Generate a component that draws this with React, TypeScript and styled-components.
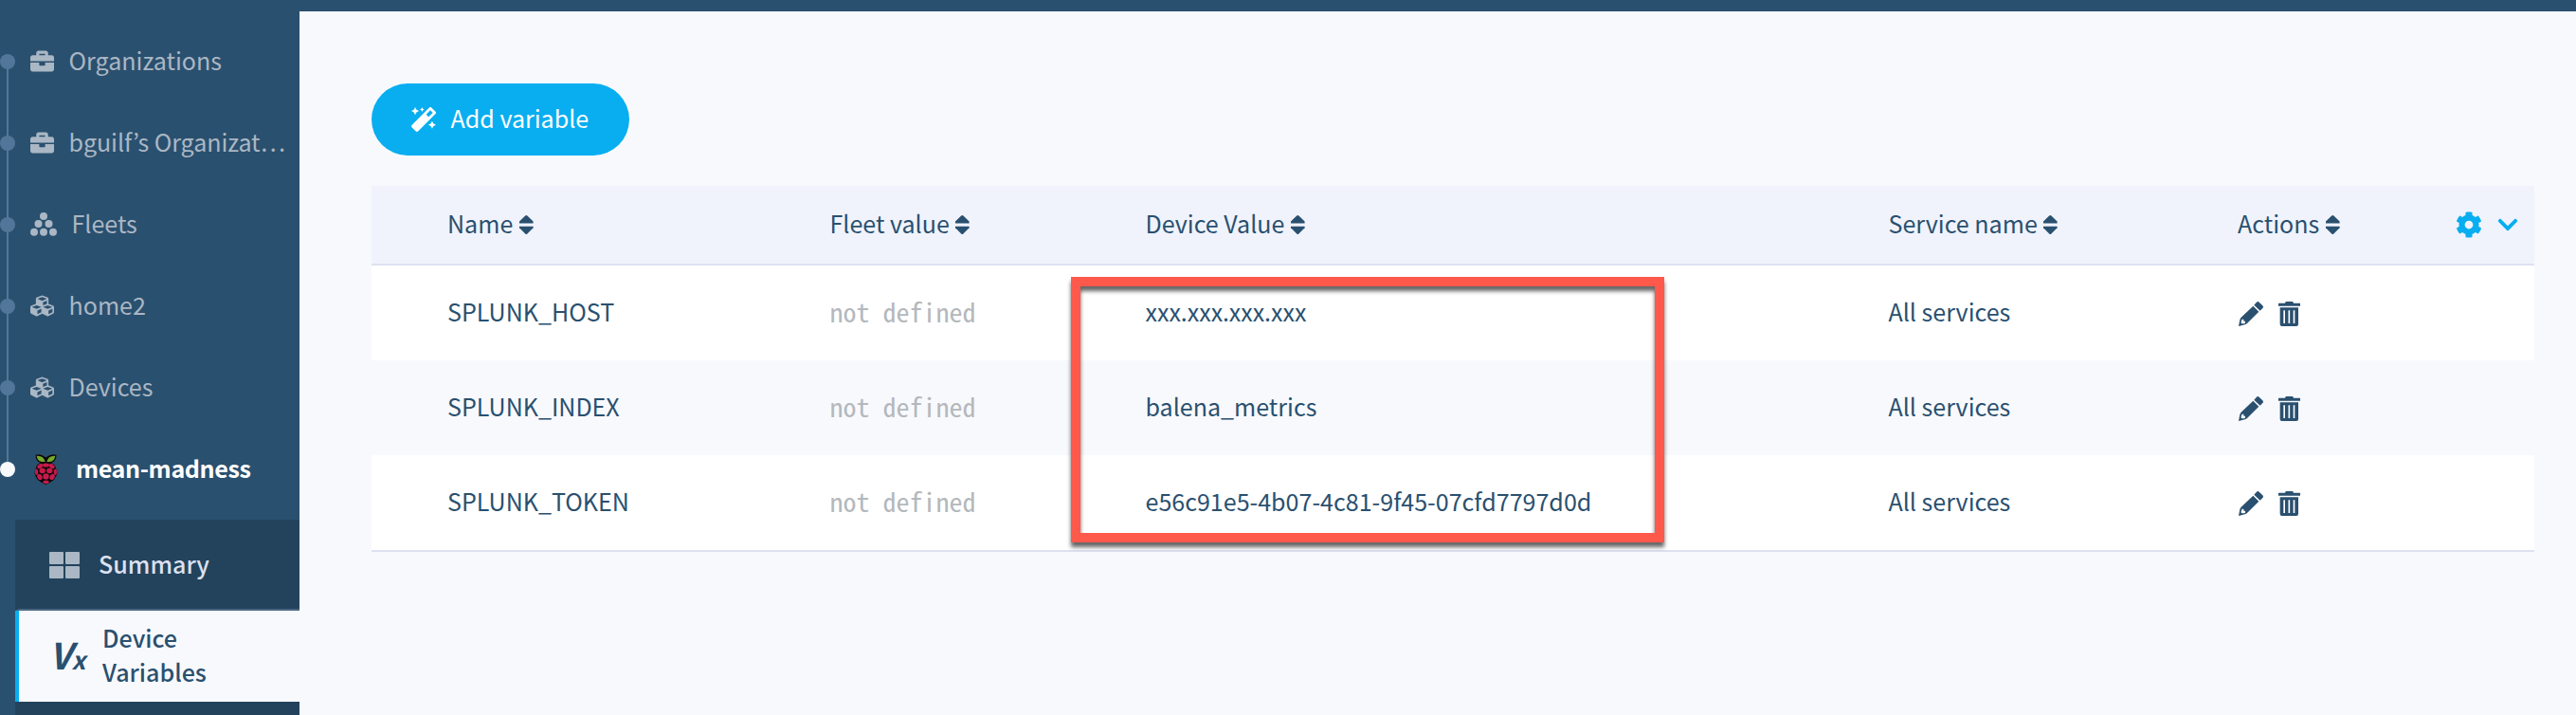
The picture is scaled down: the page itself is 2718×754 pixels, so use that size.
import React from 'react';
import styled, { createGlobalStyle } from 'styled-components';
import { FaBriefcase, FaCubes, FaCog, FaChevronDown, FaMagic } from 'react-icons/fa';

const SANS = '"Noto Sans CJK JP", "Noto Sans", sans-serif';
const MONO = '"Noto Sans Mono CJK JP", "Liberation Mono", monospace';
const navy = '#2a506f';

const GlobalStyle = createGlobalStyle`
  *, *::before, *::after { box-sizing: border-box; }
  body { margin: 0; background: #f8f9fd; color: ${navy}; font: 25.05px/36px ${SANS}; overflow: hidden; }
`;

const Page = styled.div`
  height: 754px;
  border-top: 12px solid ${navy};
  display: flex;
  overflow: hidden;
`;

const Sidebar = styled.aside`
  width: 316px;
  flex: none;
  background: ${navy};
`;

const Crumbs = styled.nav`
  display: flex;
  flex-direction: column;
  padding-top: 10px;
  height: 536px;
`;

const Crumb = styled.a<{ $current?: boolean }>`
  display: flex;
  align-items: center;
  height: 86px;
  white-space: nowrap;
  color: ${p => (p.$current ? '#fff' : '#aab7c4')};
  font-weight: ${p => (p.$current ? 700 : 400)};
`;

const Rail = styled.span<{ $first?: boolean; $last?: boolean }>`
  width: 16px;
  height: 86px;
  flex: none;
  display: grid;
  place-items: center;
  background: linear-gradient(#527699, #527699) no-repeat 7px ${p => (p.$first ? '43px' : '0')} / 2px ${p => (p.$first || p.$last ? '43px' : '86px')};
  &::after {
    content: '';
    width: 16px;
    height: 16px;
    border-radius: 50%;
    background: ${p => (p.$last ? '#f8f9fd' : '#527699')};
  }
`;

const CrumbIcon = styled.span<{ $indent?: number; $gap?: number; $lift?: number }>`
  display: flex;
  margin-left: ${p => p.$indent ?? 16}px;
  margin-right: ${p => p.$gap ?? 15.5}px;
  margin-bottom: ${p => p.$lift ?? 2}px;
`;

const Label = styled.span<{ $spacing?: number; $lift?: number }>`
  letter-spacing: ${p => p.$spacing ?? 0}px;
  margin-bottom: ${p => p.$lift ?? 5}px;
`;

const SubMenu = styled.div`
  margin-left: 16px;
  background: #23435d;
  height: 206px;
`;

const SubItem = styled.a<{ $active?: boolean }>`
  display: flex;
  align-items: center;
  height: 96px;
  font-weight: 500;
  color: ${p => (p.$active ? navy : '#dde1f0')};
  background: ${p => (p.$active ? '#f8f9fd' : 'transparent')};
  border-left: 4px solid ${p => (p.$active ? '#08aef0' : 'transparent')};
  border-bottom: ${p => (p.$active ? '0' : '2px solid #4a6583')};
  padding-left: 32px;
`;

const SummaryIcon = styled.span`
  display: flex;
  margin: 1px 20px 0 0;
`;

const Vx = styled.span`
  display: flex;
  align-items: baseline;
  width: 56px;
  font-weight: 700;
  font-style: italic;
  font-size: 38px;
  small { font-size: 26px; }
`;

const Main = styled.main`
  flex: 1;
  padding: 76px 44px 0 76px;
`;

const AddButton = styled.button`
  display: flex;
  align-items: center;
  gap: 15.5px;
  width: 272px;
  height: 76px;
  padding: 0 0 0 42px;
  border: 0;
  border-radius: 38px;
  background: #08aef0;
  color: #fff;
  font: inherit;
`;

const Table = styled.div`
  margin-top: 32px;
  border-bottom: 2px solid #dde1f0;
  position: relative;
`;

const Row = styled.div<{ $head?: boolean }>`
  display: grid;
  grid-template-columns: 403.5px 333px 784px 368.5px 1fr;
  align-items: center;
  height: ${p => (p.$head ? 84 : 100)}px;
  padding-left: 80px;
  background: #fff;
  border-bottom: ${p => (p.$head ? '2px solid #dde1f0' : '0')};
  &:nth-child(odd) { background: ${p => (p.$head ? '#f0f3fc' : '#f8f9fd')}; }
`;

const Cell = styled.div`
  display: flex;
  align-items: center;
  white-space: nowrap;
`;

const Undefined = styled(Label)`
  font-family: ${MONO};
  font-size: 28px;
  color: #b4b8bc;
`;

const SortGlyph = styled.svg`
  margin-left: 6.5px;
`;

const ActionCell = styled(Cell)`
  gap: 16px;
  padding: 2px 0 0 1px;
`;

const HeadEnd = styled(Cell)`
  justify-content: space-between;
  padding-right: 16px;
`;

const Settings = styled.span`
  display: flex;
  align-items: center;
  gap: 15px;
  color: #08aef0;
`;

const Highlight = styled.div`
  position: absolute;
  left: 738px;
  top: 96px;
  width: 626px;
  height: 280px;
  border: 10px solid #ff594c;
  filter: drop-shadow(0 5px 2px rgba(0, 0, 0, 0.6));
`;

const Sort = () => (
  <SortGlyph width="15" height="20" viewBox="0 0 15 20" fill={navy}>
    <path d="M6.200.5q1.100-1 2.200 0L14.600 6.600V8.500H0V6.600z" />
    <path d="M0 11.700h14.600v1.600L8.400 19.500q-1.100 1-2.200 0L0 13.300z" />
  </SortGlyph>
);

const Pencil = () => (
  <svg width="26" height="26" viewBox="0 0 78 78" fill={navy}>
    <path d="M57 2q4-4 8 0l11 11q4 4 0 8l-8 8L49 11z" />
    <path fillRule="evenodd" d="M46 14l18 18-37 37q-3 3-7 4L0 78l4-20q1-4 4-8zM11 56q-4 7-3 12 5 4 13 0V62h-5v-6z" />
  </svg>
);

const Trash = () => (
  <svg width="23" height="26" viewBox="0 0 69 78" fill={navy}>
    <path d="M0 6q0-1 2-1h19l2-4q1-1 2-1h19q1 0 2 1l2 4h19q2 0 2 1v8H0z" />
    <path fillRule="evenodd" d="M5 19h58v53q0 6-6 6H11q-6 0-6-6zM16 28v41h5V28zM31.500 28v41h5V28zM47 28v41h5V28z" />
  </svg>
);

const Stack = () => (
  <svg width="28" height="25" viewBox="0 0 28 25" fill="#aab7c4">
    {[[14, 4], [8.500, 12], [19.500, 12], [4, 20.800], [14, 20.800], [24, 20.800]].map(([x, y]) => (
      <circle key={`${x}-${y}`} cx={x} cy={y} r="4" />
    ))}
  </svg>
);

const Raspberry = () => (
  <svg width="25" height="32" viewBox="0 0 25 32">
    <path d="M1.500.8Q7-.8 12.300 3.500 18-.8 23.500.8 23.500 7 18.500 9 22.500 11 23 15 25 18 24 21.500 22.500 24.500 21 27 17 30 12.500 32 8 30.500 4 27 2 25 .9 21.500 0 18 2 15 2 11 6.500 9 1.500 7 1.500.8z" fill="#0b0709" />
    <path d="M2.600 1.700Q10 1 11.600 8 3.800 9 2.600 1.700zM22.400 1.700Q15 1 13.400 8 21.200 9 22.400 1.700z" fill="#75a928" />
    <g fill="#c51a4a">
      <ellipse cx="12.500" cy="11.400" rx="3.600" ry="2" />
      <ellipse cx="6.300" cy="12.600" rx="3.200" ry="2.200" transform="rotate(-35 6.300 12.600)" />
      <ellipse cx="18.700" cy="12.600" rx="3.200" ry="2.200" transform="rotate(35 18.700 12.600)" />
      <ellipse cx="8.700" cy="17.300" rx="3.200" ry="2.900" />
      <ellipse cx="16.300" cy="17.300" rx="3.200" ry="2.900" />
      <ellipse cx="2.600" cy="18.800" rx="1.600" ry="3.200" />
      <ellipse cx="22.400" cy="18.800" rx="1.600" ry="3.200" />
      <circle cx="12.500" cy="23.400" r="3.200" />
      <ellipse cx="5.900" cy="24" rx="2.500" ry="3.300" transform="rotate(-28 5.900 24)" />
      <ellipse cx="19.100" cy="24" rx="2.500" ry="3.300" transform="rotate(28 19.100 24)" />
      <ellipse cx="12.500" cy="29.200" rx="3.200" ry="1.800" />
    </g>
  </svg>
);

const Tiles = () => (
  <svg width="32" height="28" viewBox="0 0 32 28" fill="#aab7c4">
    <rect width="15" height="13" rx="1" />
    <rect x="17" width="15" height="13" rx="1" />
    <rect y="15" width="15" height="13" rx="1" />
    <rect x="17" y="15" width="15" height="13" rx="1" />
  </svg>
);

const variables = [
  { name: 'SPLUNK_HOST', value: 'xxx.xxx.xxx.xxx' },
  { name: 'SPLUNK_INDEX', value: 'balena_metrics' },
  { name: 'SPLUNK_TOKEN', value: 'e56c91e5-4b07-4c81-9f45-07cfd7797d0d' },
];

const SortableHead = ({ title }: { title: string }) => (
  <Cell><Label>{title}</Label><Sort /></Cell>
);

export default function App() {
  return (
    <>
      <GlobalStyle />
      <Page>
        <Sidebar>
          <Crumbs>
            <Crumb><Rail $first /><CrumbIcon><FaBriefcase size={25} /></CrumbIcon><Label>Organizations</Label></Crumb>
            <Crumb><Rail /><CrumbIcon><FaBriefcase size={25} /></CrumbIcon><Label $spacing={-0.07}>bguilf’s Organizat…</Label></Crumb>
            <Crumb><Rail /><CrumbIcon><Stack /></CrumbIcon><Label>Fleets</Label></Crumb>
            <Crumb><Rail /><CrumbIcon><FaCubes size={25} /></CrumbIcon><Label>home2</Label></Crumb>
            <Crumb><Rail /><CrumbIcon><FaCubes size={25} /></CrumbIcon><Label>Devices</Label></Crumb>
            <Crumb $current><Rail $last /><CrumbIcon $indent={19.5} $gap={19.5} $lift={0}><Raspberry /></CrumbIcon><Label $spacing={-0.37}>mean-madness</Label></Crumb>
          </Crumbs>
          <SubMenu>
            <SubItem><SummaryIcon><Tiles /></SummaryIcon><Label $lift={3}>Summary</Label></SubItem>
            <SubItem $active><Vx>V<small>x</small></Vx><Label>Device<br />Variables</Label></SubItem>
          </SubMenu>
        </Sidebar>
        <Main>
          <AddButton><FaMagic size={26} /><Label>Add variable</Label></AddButton>
          <Table>
            <Row $head>
              <SortableHead title="Name" />
              <SortableHead title="Fleet value" />
              <SortableHead title="Device Value" />
              <SortableHead title="Service name" />
              <HeadEnd>
                <SortableHead title="Actions" />
                <Settings><FaCog size={28} /><FaChevronDown size={24} /></Settings>
              </HeadEnd>
            </Row>
            {variables.map(v => (
              <Row key={v.name}>
                <Cell><Label>{v.name}</Label></Cell>
                <Cell><Undefined>not defined</Undefined></Cell>
                <Cell><Label>{v.value}</Label></Cell>
                <Cell><Label>All services</Label></Cell>
                <ActionCell><Pencil /><Trash /></ActionCell>
              </Row>
            ))}
            <Highlight />
          </Table>
        </Main>
      </Page>
    </>
  );
}
